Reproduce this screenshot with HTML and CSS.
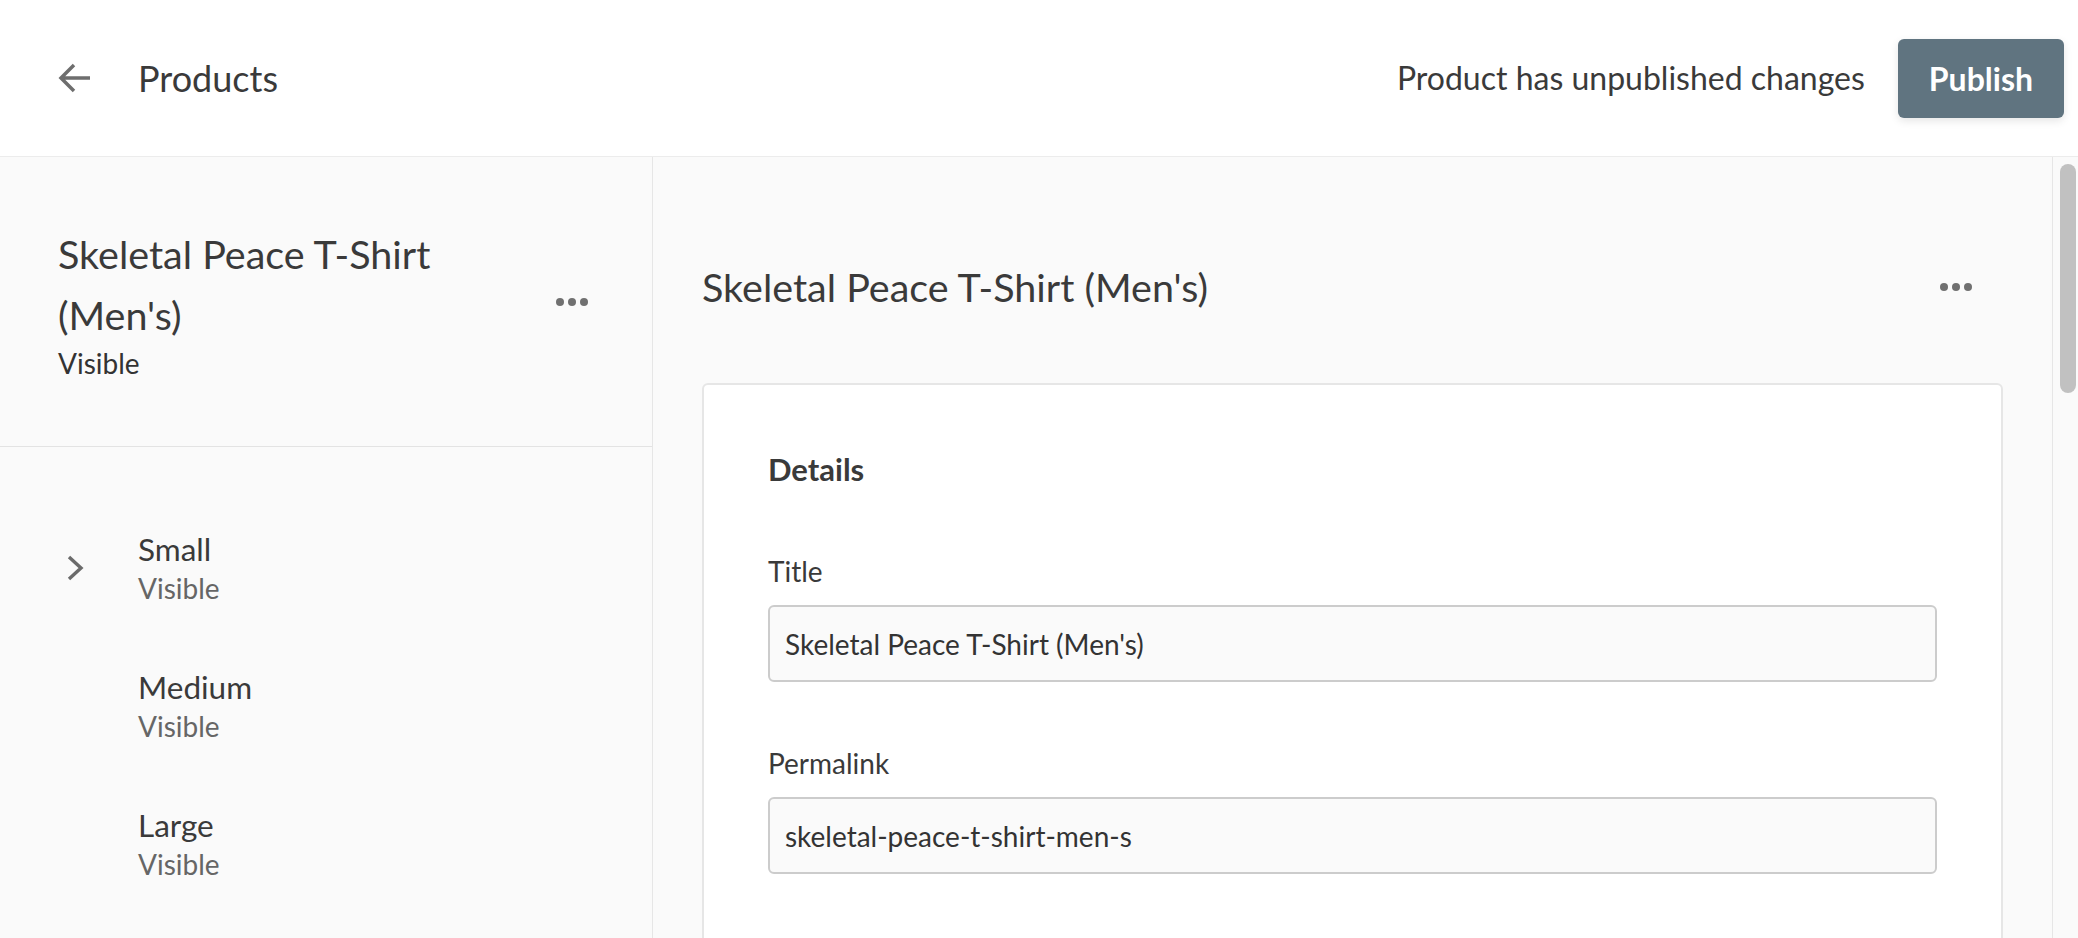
FILE: index.html
```html
<!DOCTYPE html>
<html lang="en">
<head>
<meta charset="utf-8">
<title>Products</title>
<link rel="stylesheet" href="styles.css">
</head>
<body>
<header class="topbar">
  <button class="back" aria-label="Back">
    <svg width="32" height="32" viewBox="0 0 32 32"><path d="M32 16H3 M16 3 L3 16 L16 29" fill="none" stroke="#6e6e6e" stroke-width="3.5" stroke-linejoin="miter"/></svg>
  </button>
  <div class="crumb">Products</div>
  <div class="spacer"></div>
  <div class="status">Product has unpublished changes</div>
  <button class="publish">Publish</button>
</header>
<div class="layout">
  <aside class="sidebar">
    <div class="side-head">
      <div class="side-title-block">
        <div class="side-title">Skeletal Peace T-Shirt (Men's)</div>
        <div class="side-sub">Visible</div>
      </div>
      <div class="dots"><span></span><span></span><span></span></div>
    </div>
    <ul class="variants">
      <li class="variant">
        <div class="chev"><svg width="18" height="26" viewBox="0 0 18 26"><path d="M3 2 L15 13 L3 24" fill="none" stroke="#6b6b6b" stroke-width="3.4"/></svg></div>
        <div class="variant-text"><div class="variant-name">Small</div><div class="variant-sub">Visible</div></div>
      </li>
      <li class="variant">
        <div class="chev"></div>
        <div class="variant-text"><div class="variant-name">Medium</div><div class="variant-sub">Visible</div></div>
      </li>
      <li class="variant">
        <div class="chev"></div>
        <div class="variant-text"><div class="variant-name">Large</div><div class="variant-sub">Visible</div></div>
      </li>
    </ul>
  </aside>
  <main class="main">
    <div class="main-head">
      <h1 class="main-title">Skeletal Peace T-Shirt (Men's)</h1>
      <div class="dots"><span></span><span></span><span></span></div>
    </div>
    <section class="card">
      <h2 class="card-title">Details</h2>
      <div class="field">
        <label class="label">Title</label>
        <div class="input">Skeletal Peace T-Shirt (Men's)</div>
      </div>
      <div class="field">
        <label class="label">Permalink</label>
        <div class="input">skeletal-peace-t-shirt-men-s</div>
      </div>
    </section>
  </main>
  <div class="scrollbar"><div class="thumb"></div></div>
</div>
</body>
</html>
```

FILE: styles.css
```css
* { box-sizing: border-box; }
html, body { margin: 0; padding: 0; }
body {
  width: 2078px;
  height: 938px;
  overflow: hidden;
  background: #fafafa;
  font-family: Lato, "Noto Sans", sans-serif;
  color: #3a3a3a;
}
.topbar {
  height: 157px;
  background: #fff;
  border-bottom: 1px solid #ececec;
  display: flex;
  align-items: center;
  padding: 0 14px 0 58px;
}
.back {
  border: 0;
  background: none;
  padding: 0;
  width: 32px;
  height: 32px;
  margin-right: 48px;
  display: flex;
}
.crumb {
  font-size: 36px;
  line-height: 40px;
  color: #3a3a3a;
}
.spacer { flex: 1; }
.status {
  font-size: 32px;
  line-height: 40px;
  color: #3a3a3a;
  margin-right: 33px;
}
.publish {
  height: 79px;
  padding: 0 31px;
  border: 0;
  border-radius: 6px;
  background: #607480;
  color: #fff;
  font-family: Lato, "Noto Sans", sans-serif;
  font-weight: 700;
  font-size: 32px;
  box-shadow: 0 3px 8px rgba(0,0,0,0.10);
}
.layout {
  display: flex;
  height: 781px;
}
.sidebar {
  width: 653px;
  flex: none;
  border-right: 1px solid #e6e6e6;
  background: #fafafa;
}
.side-head {
  height: 290px;
  border-bottom: 1px solid #e3e3e3;
  display: flex;
  align-items: center;
  padding: 0 64px 0 58px;
}
.side-title-block { width: 440px; }
.side-title {
  font-size: 39.5px;
  line-height: 61px;
  color: #3a3a3a;
}
.side-sub {
  font-size: 28px;
  line-height: 36px;
  color: #333;
}
.dots {
  margin-left: auto;
  display: flex;
  gap: 4px;
}
.dots span {
  width: 8px;
  height: 8px;
  border-radius: 50%;
  background: #707070;
}
.variants {
  list-style: none;
  margin: 0;
  padding: 52px 0 0 58px;
}
.variant {
  height: 138px;
  display: flex;
  align-items: center;
}
.chev {
  width: 32px;
  margin-right: 48px;
  display: flex;
  justify-content: center;
  padding-left: 2px;
}
.variant-name {
  font-size: 31.5px;
  line-height: 40px;
  color: #3a3a3a;
}
.variant-sub {
  font-size: 28px;
  line-height: 38px;
  color: #666;
}
.main {
  flex: 1;
  padding: 99px 49px 0;
  overflow: hidden;
}
.main-head {
  display: flex;
  align-items: center;
  padding-right: 31px;
}
.main-title {
  margin: 0;
  font-weight: 400;
  font-size: 39.5px;
  line-height: 61px;
  color: #3a3a3a;
}
.card {
  margin-top: 66px;
  background: #fff;
  border: 2px solid #e6e6e6;
  border-radius: 6px;
  padding: 64px;
  min-height: 700px;
}
.card-title {
  margin: 0 0 64px;
  font-size: 31px;
  line-height: 40px;
  font-weight: 700;
  color: #3a3a3a;
}
.field { margin-bottom: 63px; }
.label {
  display: block;
  font-size: 28px;
  line-height: 36px;
  margin-bottom: 16px;
  color: #3a3a3a;
}
.input {
  height: 77px;
  border: 2px solid #cccccc;
  border-radius: 6px;
  background: #fafafa;
  padding: 0 15px;
  display: flex;
  align-items: center;
  font-size: 28px;
  color: #333;
}
.scrollbar {
  width: 26px;
  flex: none;
  border-left: 1px solid #e6e6e6;
  background: #fafafa;
  padding: 7px 2px 0 7px;
}
.thumb {
  width: 16px;
  height: 229px;
  border-radius: 8px;
  background: #c1c1c1;
}
```
